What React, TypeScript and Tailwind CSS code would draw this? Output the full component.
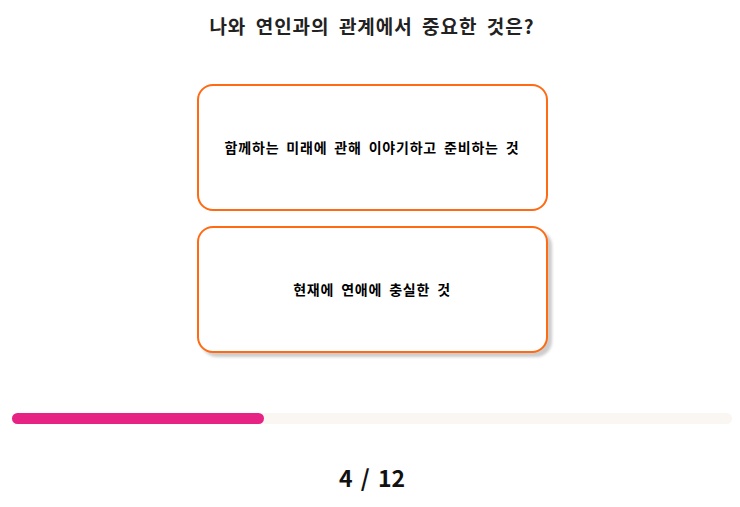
import React from 'react';

const options = ['함께하는 미래에 관해 이야기하고 준비하는 것', '현재에 연애에 충실한 것'];

export default function App() {
  const current = 4;
  const total = 12;

  return (
    <div
      className="w-[740px] h-[507px] bg-white flex flex-col items-center"
      style={{ fontFamily: '"Noto Sans CJK KR", "Noto Sans", sans-serif' }}
    >
      <h1 className="mt-[12px] ml-[4px] text-[19px] leading-[28px] font-bold tracking-[1px] [word-spacing:4px] text-[#222]">
        나와 연인과의 관계에서 중요한 것은?
      </h1>

      <div className="mt-[44px] ml-[4px] flex flex-col gap-[15px]">
        {options.map((text, i) => (
          <button
            key={text}
            className={
              'w-[351px] h-[127px] rounded-[16px] border-2 border-[#ff6a13] bg-white flex items-center justify-center text-[14px] font-bold tracking-[0.8px] [word-spacing:3px] text-black ' +
              (i === 1 ? 'shadow-[4px_4px_3px_rgba(0,0,0,0.2)]' : '')
            }
          >
            {text}
          </button>
        ))}
      </div>

      <div className="mt-[60px] w-full pl-3 pr-2">
        <div className="h-[11px] w-full rounded-full bg-[#faf6f1]">
          <div className="h-full w-[35%] rounded-full bg-[#e62284]" />
        </div>
      </div>

      <div className="mt-[37px] ml-[4px] text-[23px] leading-[32px] font-bold [word-spacing:3px] text-[#111]">
        {current} / {total}
      </div>
    </div>
  );
}
